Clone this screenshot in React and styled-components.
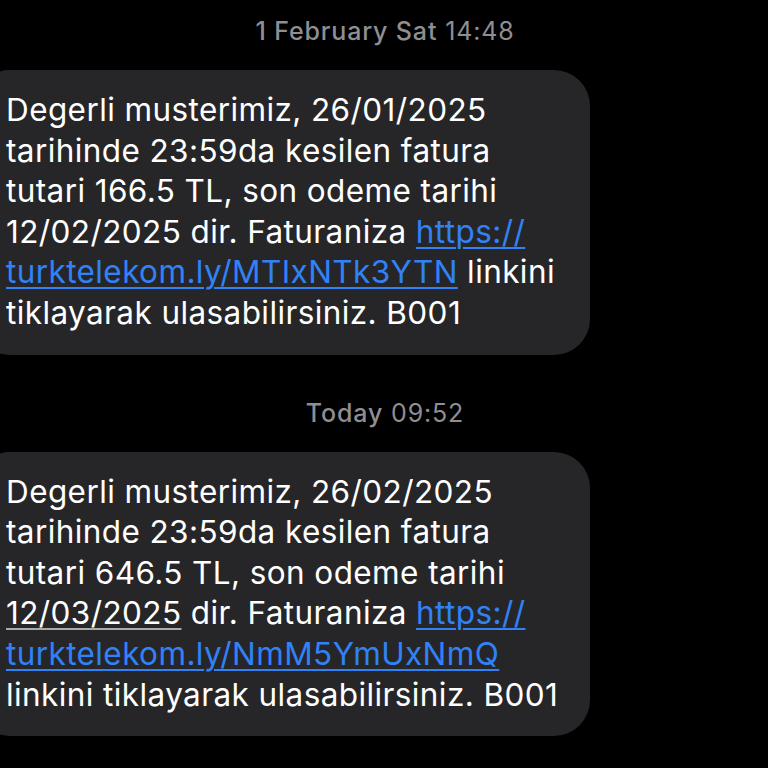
import React from "react";
import styled, { createGlobalStyle } from "styled-components";

const Global = createGlobalStyle`
  html, body {
    margin: 0;
    padding: 0;
    background: #000;
  }
  body {
    font-family: Inter, "Noto Sans", sans-serif;
    overflow: hidden;
  }
`;

const messages = [
  {
    day: "1 February Sat",
    time: "14:48",
    lines: [
      ["Degerli musterimiz, 26/01/2025"],
      ["tarihinde 23:59da kesilen fatura"],
      ["tutari 166.5 TL, son odeme tarihi"],
      ["12/02/2025 dir. Faturaniza ", { link: "https://" }],
      [{ link: "turktelekom.ly/MTIxNTk3YTN" }, " linkini"],
      ["tiklayarak ulasabilirsiniz. B001"],
    ],
  },
  {
    day: "Today",
    time: "09:52",
    lines: [
      ["Degerli musterimiz, 26/02/2025"],
      ["tarihinde 23:59da kesilen fatura"],
      ["tutari 646.5 TL, son odeme tarihi"],
      [{ date: "12/03/2025" }, " dir. Faturaniza ", { link: "https://" }],
      [{ link: "turktelekom.ly/NmM5YmUxNmQ" }],
      ["linkini tiklayarak ulasabilirsiniz. B001"],
    ],
  },
];

const Thread = styled.div`
  display: flex;
  flex-direction: column;
  width: 768px;
  height: 768px;
  padding-top: 16px;
  box-sizing: border-box;
`;

const Stamp = styled.div`
  text-align: center;
  color: #8e8e93;
  font-size: 25px;
  line-height: 30px;
  letter-spacing: 0.85px;
  padding-left: 2px;
  margin-bottom: ${(p) => p.$gap}px;

  b {
    font-weight: 500;
  }
`;

const Bubble = styled.div`
  align-self: flex-start;
  width: 616px;
  margin-left: -26px;
  box-sizing: border-box;
  padding: 20px 20px 21px 32px;
  background: #262628;
  border-radius: 36px;
  color: #fff;
  font-size: 31.5px;
  letter-spacing: 0.4px;
  line-height: 40.6px;
  margin-bottom: ${(p) => p.$gap}px;
`;

const Line = styled.div`
  white-space: nowrap;
`;

const Link = styled.span`
  color: #3182f6;
  text-decoration: underline;
  text-decoration-thickness: 2px;
  text-underline-offset: 4px;
`;

const DateText = styled.span`
  text-decoration: underline;
  text-decoration-color: #a8a8ad;
  text-decoration-thickness: 2px;
  text-underline-offset: 4px;
`;

const renderPart = (part, i) => {
  if (typeof part === "string") return <React.Fragment key={i}>{part}</React.Fragment>;
  if (part.link) return <Link key={i}>{part.link}</Link>;
  return <DateText key={i}>{part.date}</DateText>;
};

export default function App() {
  return (
    <>
      <Global />
      <Thread>
        {messages.map((m, idx) => (
          <React.Fragment key={idx}>
            <Stamp $gap={24}>
              <b>{m.day}</b> {m.time}
            </Stamp>
            <Bubble $gap={idx === 0 ? 43 : 0}>
              {m.lines.map((line, j) => (
                <Line key={j}>{line.map(renderPart)}</Line>
              ))}
            </Bubble>
          </React.Fragment>
        ))}
      </Thread>
    </>
  );
}
